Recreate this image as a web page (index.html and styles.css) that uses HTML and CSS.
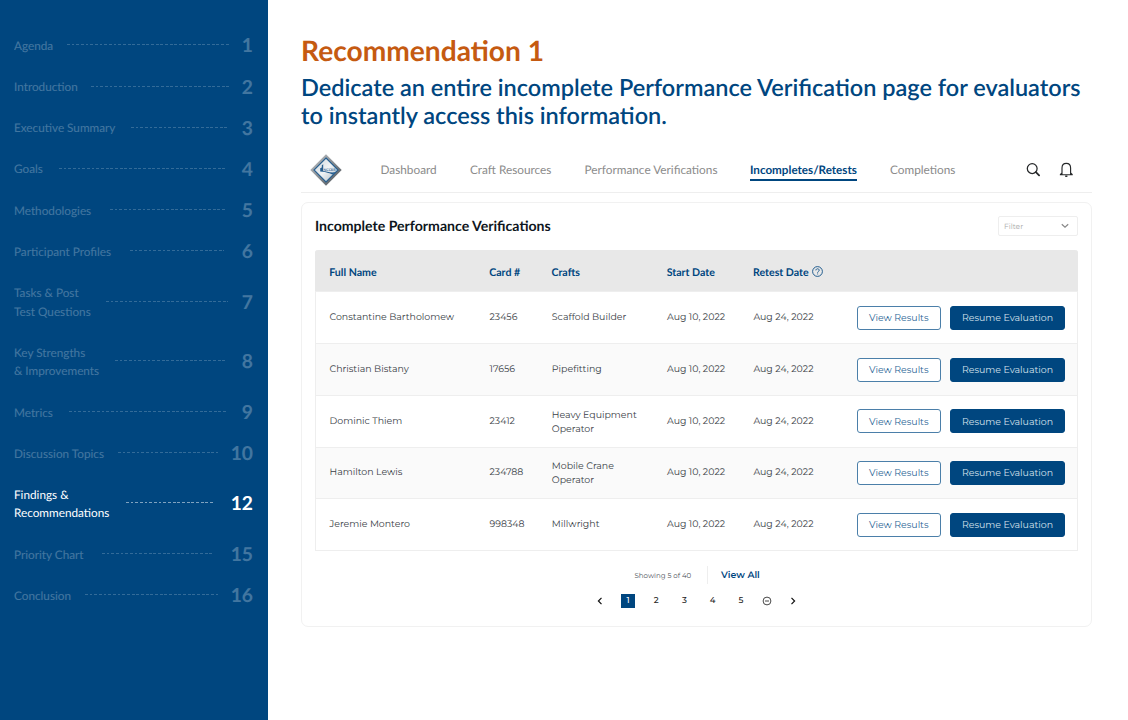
FILE: index.html
```html
<!DOCTYPE html>
<html lang="en">
<head>
<meta charset="utf-8">
<title>Recommendation 1</title>
<link rel="stylesheet" href="styles.css">
</head>
<body>
<div class="slide">
  <nav class="contents">
    <div class="entry" style="--start:53px;--len:162px"><span>Agenda</span><i class="leader"></i><b>1</b></div>
    <div class="entry" style="--start:77px;--len:139px"><span>Introduction</span><i class="leader"></i><b>2</b></div>
    <div class="entry" style="--start:117px;--len:96px"><span>Executive Summary</span><i class="leader"></i><b>3</b></div>
    <div class="entry" style="--start:45px;--len:168px"><span>Goals</span><i class="leader"></i><b>4</b></div>
    <div class="entry" style="--start:96px;--len:115px"><span>Methodologies</span><i class="leader"></i><b>5</b></div>
    <div class="entry" style="--start:116px;--len:94px"><span>Participant Profiles</span><i class="leader"></i><b>6</b></div>
    <div class="entry" style="--start:92px;--len:122px"><span>Tasks &amp; Post<br>Test Questions</span><i class="leader"></i><b>7</b></div>
    <div class="entry" style="--start:101px;--len:111px"><span>Key Strengths<br>&amp; Improvements</span><i class="leader"></i><b>8</b></div>
    <div class="entry" style="--start:55px;--len:157px"><span>Metrics</span><i class="leader"></i><b>9</b></div>
    <div class="entry" style="--start:104px;--len:100px"><span>Discussion Topics</span><i class="leader"></i><b>10</b></div>
    <div class="entry current" style="--start:112px;--len:89px"><span>Findings &amp;<br>Recommendations</span><i class="leader"></i><b>12</b></div>
    <div class="entry" style="--start:88px;--len:112px"><span>Priority Chart</span><i class="leader"></i><b>15</b></div>
    <div class="entry" style="--start:71px;--len:133px"><span>Conclusion</span><i class="leader"></i><b>16</b></div>
  </nav>
  <main class="content">
    <h1>Recommendation 1</h1>
    <h2>Dedicate an entire incomplete Performance Verification page for evaluators<br>to instantly access this information.</h2>
    <header class="topbar">
      <svg class="logo" width="32" height="32" viewBox="0 0 32 32">
        <defs><linearGradient id="steel" x1="0" y1="0" x2="1" y2="1"><stop offset="0" stop-color="#c3c6c9"/><stop offset=".45" stop-color="#8c9196"/><stop offset="1" stop-color="#454c52"/></linearGradient>
        <linearGradient id="face" x1="0" y1="0" x2="1" y2="1"><stop offset="0" stop-color="#c9d2da"/><stop offset=".5" stop-color="#f0f3f5"/><stop offset="1" stop-color="#aab6c1"/></linearGradient></defs>
        <path d="M16 .3 31.7 16 16 31.7.3 16z" fill="url(#steel)"/>
        <path d="M16 4 28 16 16 28 4 16z" fill="url(#face)" stroke="#255f91" stroke-width="1.1"/>
        <path d="M10.2 17.5v-3.200l1.600-.8v-2.200l1.400-1v6.600c3.500.3 7 2.200 12.300 1.200l-2.500 2.400c-3-.7-5.500-2.500-12.800-3z" fill="#285f90"/>
        <text x="13.6" y="16.900" class="logo-text">NCCER</text>
      </svg>
      <a>Dashboard</a><a>Craft Resources</a><a>Performance Verifications</a><a class="active">Incompletes/Retests</a><a>Completions</a>
      <svg class="search" width="16" height="16" viewBox="0 0 16 16" fill="none" stroke="#26282a"><circle cx="7.200" cy="6.600" r="4.900" stroke-width="1.250"/><path d="m10.900 10.200 3.200 3.100" stroke-width="1.800" stroke-linecap="round"/></svg>
      <svg class="bell" width="16" height="16" viewBox="0 0 16 16" fill="none" stroke="#26282a" stroke-width="1.150"><path d="M1.300 12.700h12M3 12.500V6c0-2.700 1.800-4.700 4.300-4.700s4.300 2 4.300 4.700v6.500M1.500 12.400l1.500-1.600m10.100 1.600-1.500-1.600" stroke-linecap="round"/><path d="M6.200 14.200h2.200" stroke-width="1.500"/></svg>
    </header>
    <section class="card">
      <div class="card-head"><h3>Incomplete Performance Verifications</h3>
        <div class="filter"><span>Filter</span><svg width="8" height="6" viewBox="0 0 8 6" fill="none" stroke="#888" stroke-width="1.2"><path d="m.8 1.200 3.200 3 3.200-3"/></svg></div></div>
      <div class="table">
        <div class="row head"><span>Full Name</span><span>Card #</span><span>Crafts</span><span>Start Date</span><span class="retest">Retest Date <svg width="11" height="11" viewBox="0 0 11 11" fill="none" stroke="#00467f" stroke-width=".85"><circle cx="5.500" cy="5.500" r="4.900"/><path d="M3.900 4.400c0-2.200 3.300-2.100 3.300-.1 0 1.200-1.600 1.100-1.600 2.400M5.600 7.500v.9"/></svg></span></div>
        <div class="row"><span>Constantine Bartholomew</span><span>23456</span><span>Scaffold Builder</span><span>Aug 10, 2022</span><span>Aug 24, 2022</span><button class="view">View Results</button><button class="resume">Resume Evaluation</button></div>
        <div class="row alt"><span>Christian Bistany</span><span>17656</span><span>Pipefitting</span><span>Aug 10, 2022</span><span>Aug 24, 2022</span><button class="view">View Results</button><button class="resume">Resume Evaluation</button></div>
        <div class="row"><span>Dominic Thiem</span><span>23412</span><span class="double">Heavy Equipment<br>Operator</span><span>Aug 10, 2022</span><span>Aug 24, 2022</span><button class="view">View Results</button><button class="resume">Resume Evaluation</button></div>
        <div class="row alt"><span>Hamilton Lewis</span><span>234788</span><span class="double">Mobile Crane<br>Operator</span><span>Aug 10, 2022</span><span>Aug 24, 2022</span><button class="view">View Results</button><button class="resume">Resume Evaluation</button></div>
        <div class="row"><span>Jeremie Montero</span><span>998348</span><span>Millwright</span><span>Aug 10, 2022</span><span>Aug 24, 2022</span><button class="view">View Results</button><button class="resume">Resume Evaluation</button></div>
      </div>
      <div class="summary"><span>Showing 5 of 40</span><a>View All</a></div>
      <div class="pager">
        <svg width="28" height="8" viewBox="0 0 28 8" fill="none" stroke="#111" stroke-width="1.200"><path d="m15.500.8-3.100 3.200 3.100 3.200"/></svg>
        <span><b>1</b></span><span>2</span><span>3</span><span>4</span><span>5</span>
        <svg width="24" height="10" viewBox="0 0 24 10" fill="none" stroke="#333" stroke-width=".9"><circle cx="12" cy="5" r="3.900"/><path d="M10 5h4"/></svg>
        <svg width="28" height="8" viewBox="0 0 28 8" fill="none" stroke="#111" stroke-width="1.200"><path d="m12.500.8 3.100 3.200-3.100 3.200"/></svg>
      </div>
    </section>
  </main>
</div>
</body>
</html>
```
FILE: styles.css
```css
* { box-sizing: border-box; }
body { margin: 0; background: #fff; font-family: Lato, sans-serif; text-rendering: geometricPrecision; }
.slide { display: grid; grid-template-columns: 268px minmax(0, 1fr); height: 720px; overflow: hidden; }
.contents { background: #00467f; padding: 37.1px 15px 0 14px; display: flex; flex-direction: column; gap: 22.43px; }
.entry { display: grid; grid-template-columns: var(--start) var(--len) 1fr; align-items: center; color: #fff; font-size: 11.75px; line-height: 18.7px; }
.entry span { white-space: nowrap; opacity: .26; }
.entry b { text-align: right; font-size: 19.2px; line-height: 18px; opacity: .26; }
.leader { height: 1px; margin-bottom: 3px; opacity: .2; background: repeating-linear-gradient(90deg, #fff 0 2.8px, transparent 2.8px 4.67px); }
.current span, .current b { opacity: 1; }
.current .leader { opacity: .5; }

.content { padding: 33px 36px 0 33px; }
h1 { margin: 0; font-size: 28.15px; line-height: 35px; font-weight: 700; color: #c55a11; }
h2 { margin: 6px 0 0; font-size: 23.5px; line-height: 28px; font-weight: 600; color: #00467f; white-space: nowrap; }
.topbar { display: grid; grid-template-columns: 79.5px 89.5px 114.5px 165.5px 140px 135px 34px 1fr; align-items: center; height: 46px; margin-top: 17px; border-bottom: 1px solid #eee; font-size: 11.8px; color: #8b8b8b; }
.topbar a { white-space: nowrap; line-height: 18px; justify-self: start; }
.topbar .active { color: #00467f; font-weight: 700; font-size: 11.65px; line-height: 17px; border-bottom: 2px solid #00467f; padding-top: 3px; }
.logo { margin-left: 9px; }
.logo-text { font: 700 3.6px Lato, sans-serif; fill: #3c6f9b; }

.card { height: 425px; margin-top: 9.4px; padding: 0 13px; border: 1px solid #f1f1f1; border-radius: 7px; }
.card-head { display: flex; justify-content: space-between; align-items: center; height: 46.6px; }
h3 { margin: -1px 0 0; font-size: 14.1px; font-weight: 700; color: #0e1620; }
.filter { display: flex; align-items: center; justify-content: space-between; width: 80px; height: 20px; margin-top: -1px; padding: 0 8px 0 5px; border: 1px solid #eee; border-radius: 2px; font: 7.5px Montserrat, Inter, sans-serif; color: #aaa; }
.table { border: 1px solid #eee; border-top: 0; border-radius: 3px 3px 0 0; }
.row { display: grid; grid-template-columns: 160px 62.3px 115.2px 86.4px 103.4px 93px 115.5px; align-items: center; height: 51.7px; padding-left: 13.5px; border-top: 1px solid #eee; font: 9.42px/14px Montserrat, Inter, sans-serif; color: #393e46; }
.row > span { white-space: nowrap; margin-top: 1px; }
.row > .double { margin-top: 3px; }
.alt { background: #fafafa; }
.row.head { height: 41.5px; margin: 0 -1px; padding-left: 14.2px; border: 0; border-radius: 3px 3px 0 0; background: #e8e8e8; font: 700 10.6px/14px Lato, sans-serif; color: #00467f; }
.head > span { margin-top: 4px; }
.retest svg { margin-left: 1px; vertical-align: -1px; }
button { height: 24px; padding: 0; border: 1px solid #4b7fa9; border-radius: 3px; font: 9.42px Montserrat, Inter, sans-serif; white-space: nowrap; }
.view { width: 84px; background: #fff; color: #2b6596; }
.resume { width: 115.5px; background: #00467f; border-color: #00467f; color: #d6e2ec; }
.summary { display: flex; align-items: center; height: 17px; margin: 16px 0 0 319.5px; font: 7.05px Montserrat, Inter, sans-serif; color: #4b5058; }
.summary span { width: 72.5px; white-space: nowrap; }
.summary a { padding-left: 13px; border-left: 1px solid #eee; line-height: 17px; padding-top: 1px; font-size: 9.4px; font-weight: 600; color: #00467f; }
.pager { display: flex; align-items: center; height: 16px; margin: 9.5px 0 0 271px; font: 500 8.5px Montserrat, Inter, sans-serif; color: #222; }
.pager span { width: 28.2px; display: flex; justify-content: center; }
.pager b { width: 14px; height: 14px; background: #00467f; color: #fff; font-weight: 500; line-height: 14px; text-align: center; }
```
